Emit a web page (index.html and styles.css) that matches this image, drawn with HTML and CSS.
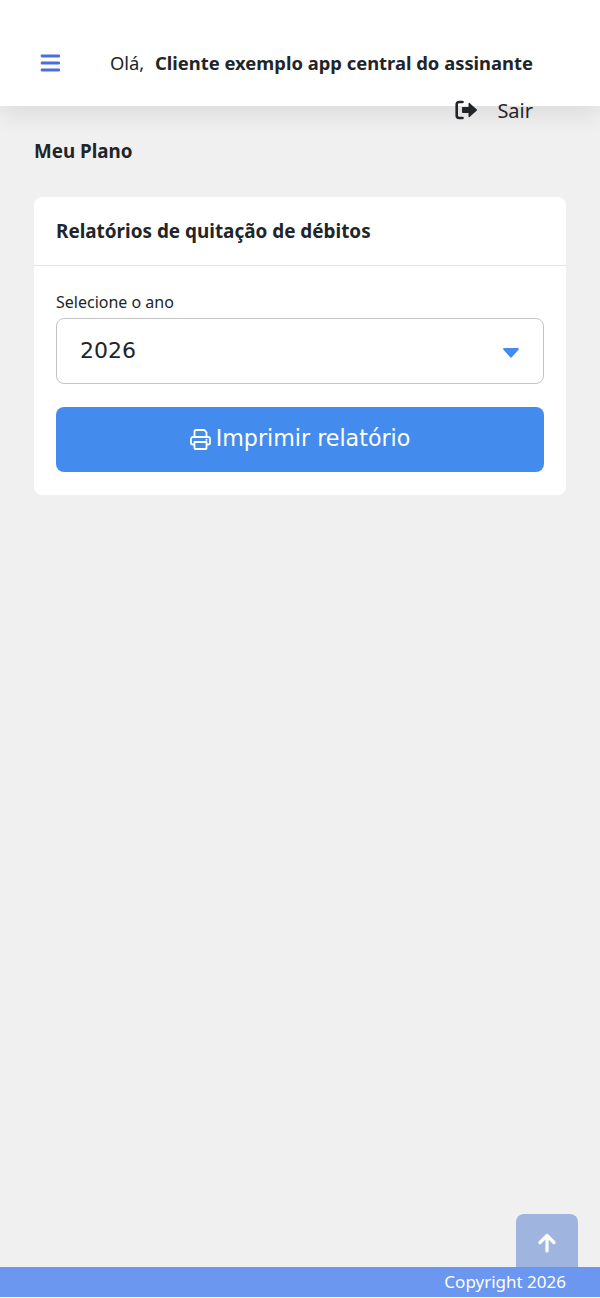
FILE: index.html
```html
<!DOCTYPE html>
<html>
<head>
    <title>Meu Plano</title>
    <link rel="stylesheet" href="styles.css">
</head>
<body>
    <div class="page">
        <div class="navbar">
            <div class="navbar-top">
                <a class="menu-btn" href="#">
                    <svg width="20" height="18" viewBox="0 0 20 18"><path d="M2 2h17M2 9h17M2 16h17" stroke="#4a6fd8" stroke-width="2.800" stroke-linecap="round" fill="none"/></svg>
                </a>
                <div class="greeting">Olá, <b>Cliente exemplo app central do assinante</b></div>
            </div>
            <a class="logout" href="#">
                <svg width="23" height="20" viewBox="0 0 23 20"><path d="M7.500 2H4.200C2.700 2 1.700 3 1.700 4.500v11c0 1.500 1 2.500 2.500 2.500h3.300" stroke="#212529" stroke-width="2.600" stroke-linecap="round" fill="none"/><path d="M13.500 3.500c0-.6.700-.9 1.100-.5l7.200 6.400c.4.300.4.900 0 1.200l-7.200 6.400c-.4.400-1.100.1-1.100-.5v-3.500H7.800c-.5 0-.8-.3-.8-.8V7.800c0-.5.300-.8.800-.8h5.700z" fill="#212529"/></svg>
                <span>Sair</span>
            </a>
        </div>

        <div class="content">
            <h1>Meu Plano</h1>
            <div class="card">
                <div class="card-header">Relatórios de quitação de débitos</div>
                <div class="card-body">
                    <label for="ano">Selecione o ano</label>
                    <div class="select-box" id="ano">
                        <span>2026</span>
                        <svg width="16" height="10" viewBox="0 0 16 10"><path d="M1.200 0h13.600c.9 0 1.400 1 .8 1.700L8.800 9.300c-.4.500-1.200.5-1.600 0L.4 1.700C-.2 1 .3 0 1.200 0z" fill="#448bee"/></svg>
                    </div>
                    <button class="print-btn">
                        <svg width="21" height="21" viewBox="0 0 21 21"><g stroke="#fff" stroke-width="1.800" fill="none" stroke-linejoin="round"><path d="M4.500 8V2.800c0-1 .7-1.800 1.700-1.800h8l2.300 2.300V8"/><path d="M4.500 15.500H2.800c-1 0-1.800-.8-1.800-1.800V10c0-1.100.9-2 2-2h15c1.100 0 2 .9 2 2v3.700c0 1-.8 1.800-1.800 1.800h-1.700"/><path d="M4.500 13h12v6.200c0 .5-.3.800-.8.800H5.300c-.5 0-.8-.3-.8-.8z"/></g><circle cx="16.500" cy="10.800" r="1" fill="#fff"/></svg>
                        <span>Imprimir relatório</span>
                    </button>
                </div>
            </div>
        </div>

        <a class="to-top" href="#">
            <svg width="20" height="20" viewBox="0 0 20 20"><path d="M10 18V3M3 9.500L10 2.500l7 7" stroke="#fff" stroke-width="3.200" stroke-linecap="round" stroke-linejoin="round" fill="none"/></svg>
        </a>
        <div class="footer">Copyright 2026</div>
    </div>
</body>
</html>
```

FILE: styles.css
```css
body {
    font-family: "Noto Sans", Arial, sans-serif;
    background-color: #fff;
    color: #212529;
    margin: 0;
    padding: 0;
}

.page {
    position: relative;
    display: flex;
    flex-direction: column;
    height: 1297px;
    background-color: #f0f0f0;
}

.navbar {
    height: 106px;
    background-color: #fff;
    box-shadow: 0 8px 24px rgba(0, 0, 0, 0.09);
    padding: 50px 67px 0 40px;
    box-sizing: border-box;
}

.navbar-top {
    display: flex;
    align-items: center;
    justify-content: space-between;
    height: 26px;
}

.menu-btn {
    display: flex;
}

.greeting {
    font-size: 18.400px;
    white-space: nowrap;
    padding-bottom: 2px;
}

.greeting b {
    margin-left: 6px;
}

.logout {
    display: flex;
    align-items: center;
    justify-content: flex-end;
    gap: 19px;
    margin-top: 19px;
    height: 30px;
    font-size: 20px;
    color: #212529;
    text-decoration: none;
}

.content {
    flex: 1;
    padding: 0 34px;
}

h1 {
    font-size: 18.800px;
    font-weight: bold;
    line-height: 26px;
    margin: 32px 0 33px;
}

.card {
    background-color: #fff;
    border-radius: 8px;
}

.card-header {
    font-size: 18.900px;
    font-weight: bold;
    line-height: 26px;
    padding: 21px 22px 21px;
    border-bottom: 1px solid #e5e5e5;
}

.card-body {
    padding: 25px 22px 23px;
}

label {
    display: block;
    font-size: 16px;
    line-height: 22px;
    margin-bottom: 5px;
}

.select-box {
    display: flex;
    align-items: center;
    justify-content: space-between;
    height: 66px;
    box-sizing: border-box;
    padding: 0 24px 0 23px;
    border: 1px solid #c4c4c4;
    border-radius: 8px;
    font-family: "DejaVu Sans", sans-serif;
    font-size: 22px;
}

.select-box span {
    padding-bottom: 2px;
}

.select-box svg {
    margin-top: 3px;
}

.print-btn {
    display: flex;
    align-items: center;
    justify-content: center;
    gap: 5px;
    width: 100%;
    height: 65px;
    margin-top: 23px;
    background-color: #448bee;
    border: none;
    border-radius: 8px;
    color: #fff;
    font-family: "DejaVu Sans", sans-serif;
    font-size: 22.200px;
}

.print-btn span {
    padding-bottom: 3px;
}

.to-top {
    position: absolute;
    right: 22px;
    bottom: 30px;
    display: flex;
    align-items: center;
    justify-content: center;
    width: 62px;
    height: 48px;
    padding-top: 5px;
    background-color: #9fb4de;
    border-radius: 8px 8px 0 0;
}

.footer {
    position: relative;
    height: 30px;
    line-height: 30px;
    background-color: #6b97f0;
    color: #fff;
    font-size: 17px;
    text-align: right;
    padding-right: 34px;
}
```
